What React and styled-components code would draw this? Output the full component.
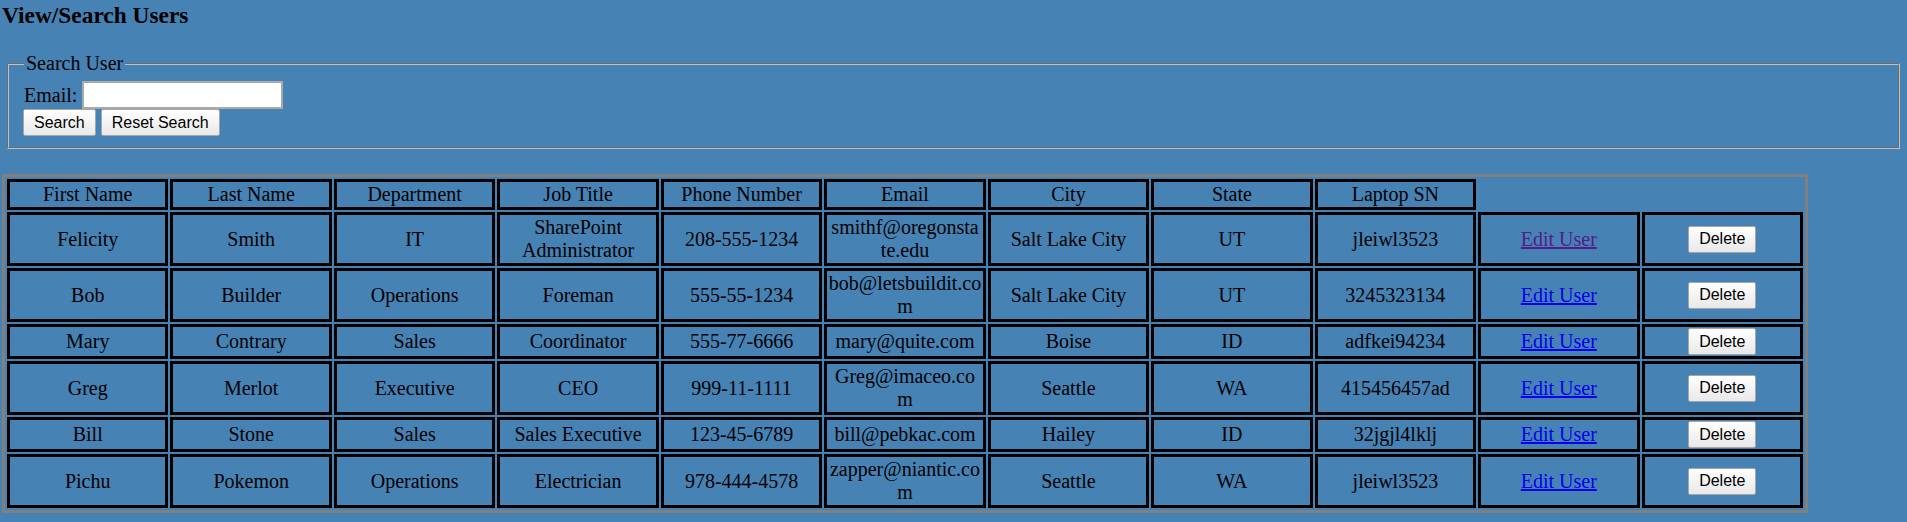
import React from "react";
import styled, { createGlobalStyle } from "styled-components";

const Global = createGlobalStyle`
  html, body { margin: 0; padding: 0; }
  body {
    background: #4682b4;
    font-family: "Liberation Serif", "Times New Roman", serif;
    font-size: 20px;
    color: #000;
  }
`;

const Page = styled.div`
  padding: 2px;
`;

const Heading = styled.h3`
  margin: 0 0 23px;
  font-size: 23.4px;
  font-weight: bold;
  line-height: normal;
`;

const Fieldset = styled.fieldset`
  margin: 0 5px;
  padding: 6px 15px 11px;
  border: 2px groove #c0c0c0;
`;

const Legend = styled.legend`
  padding: 0 2px;
`;

const FieldRow = styled.div`
  display: flex;
  align-items: center;
  height: 28px;
`;

const Label = styled.label`
  margin-right: 5px;
`;

const TextInput = styled.input`
  box-sizing: border-box;
  width: 201px;
  height: 28px;
  border: 2px solid #a9a9a9;
  background: #fff;
  font-size: 16px;
  padding: 0 3px;
`;

const ButtonRow = styled.div`
  display: flex;
  gap: 5px;
  margin-left: -1px;
`;

const Button = styled.button`
  box-sizing: border-box;
  height: 27px;
  padding: 0 10px;
  font-family: "Liberation Sans", Arial, sans-serif;
  font-size: 16px;
  color: #000;
  border: 1px solid #a6a6a6;
  border-radius: 2px;
  background: linear-gradient(#ffffff, #e8e8e8);
  vertical-align: middle;
  cursor: pointer;
`;

const Table = styled.table`
  margin-top: 25px;
  width: 1806px;
  table-layout: fixed;
  border-collapse: separate;
  border-spacing: 2px;
  border: 3px solid #808080;
`;

const cellStyle = `
  border: 3px solid #000;
  padding: 1px 1.5px;
  text-align: center;
  vertical-align: middle;
  overflow-wrap: anywhere;
  font-weight: normal;
  line-height: 23px;
`;

const HeadCell = styled.th`
  ${cellStyle}
`;

const Cell = styled.td`
  ${cellStyle}
`;

const EditLink = styled.a`
  color: ${(p) => (p.$visited ? "#551a8b" : "#0000ee")};
  text-decoration: underline;
`;

const headers = [
  "First Name",
  "Last Name",
  "Department",
  "Job Title",
  "Phone Number",
  "Email",
  "City",
  "State",
  "Laptop SN",
];

const users = [
  ["Felicity", "Smith", "IT", "SharePoint Administrator", "208-555-1234", "smithf@oregonstate.edu", "Salt Lake City", "UT", "jleiwl3523"],
  ["Bob", "Builder", "Operations", "Foreman", "555-55-1234", "bob@letsbuildit.com", "Salt Lake City", "UT", "3245323134"],
  ["Mary", "Contrary", "Sales", "Coordinator", "555-77-6666", "mary@quite.com", "Boise", "ID", "adfkei94234"],
  ["Greg", "Merlot", "Executive", "CEO", "999-11-1111", "Greg@imaceo.com", "Seattle", "WA", "415456457ad"],
  ["Bill", "Stone", "Sales", "Sales Executive", "123-45-6789", "bill@pebkac.com", "Hailey", "ID", "32jgjl4lklj"],
  ["Pichu", "Pokemon", "Operations", "Electrician", "978-444-4578", "zapper@niantic.com", "Seattle", "WA", "jleiwl3523"],
];

export default function App() {
  return (
    <Page>
      <Global />
      <Heading>View/Search Users</Heading>
      <Fieldset>
        <Legend>Search User</Legend>
        <FieldRow>
          <Label htmlFor="email">Email:</Label>
          <TextInput id="email" type="text" />
        </FieldRow>
        <ButtonRow>
          <Button type="button">Search</Button>
          <Button type="button">Reset Search</Button>
        </ButtonRow>
      </Fieldset>
      <Table>
        <colgroup>
          {Array.from({ length: 11 }).map((_, i) => (
            <col key={i} />
          ))}
        </colgroup>
        <tbody>
          <tr>
            {headers.map((h) => (
              <HeadCell key={h}>{h}</HeadCell>
            ))}
          </tr>
          {users.map((u, i) => (
            <tr key={i}>
              {u.map((v, j) => (
                <Cell key={j}>{v}</Cell>
              ))}
              <Cell>
                <EditLink href="#" $visited={i === 0} onClick={(e) => e.preventDefault()}>
                  Edit User
                </EditLink>
              </Cell>
              <Cell>
                <Button type="button">Delete</Button>
              </Cell>
            </tr>
          ))}
        </tbody>
      </Table>
    </Page>
  );
}
